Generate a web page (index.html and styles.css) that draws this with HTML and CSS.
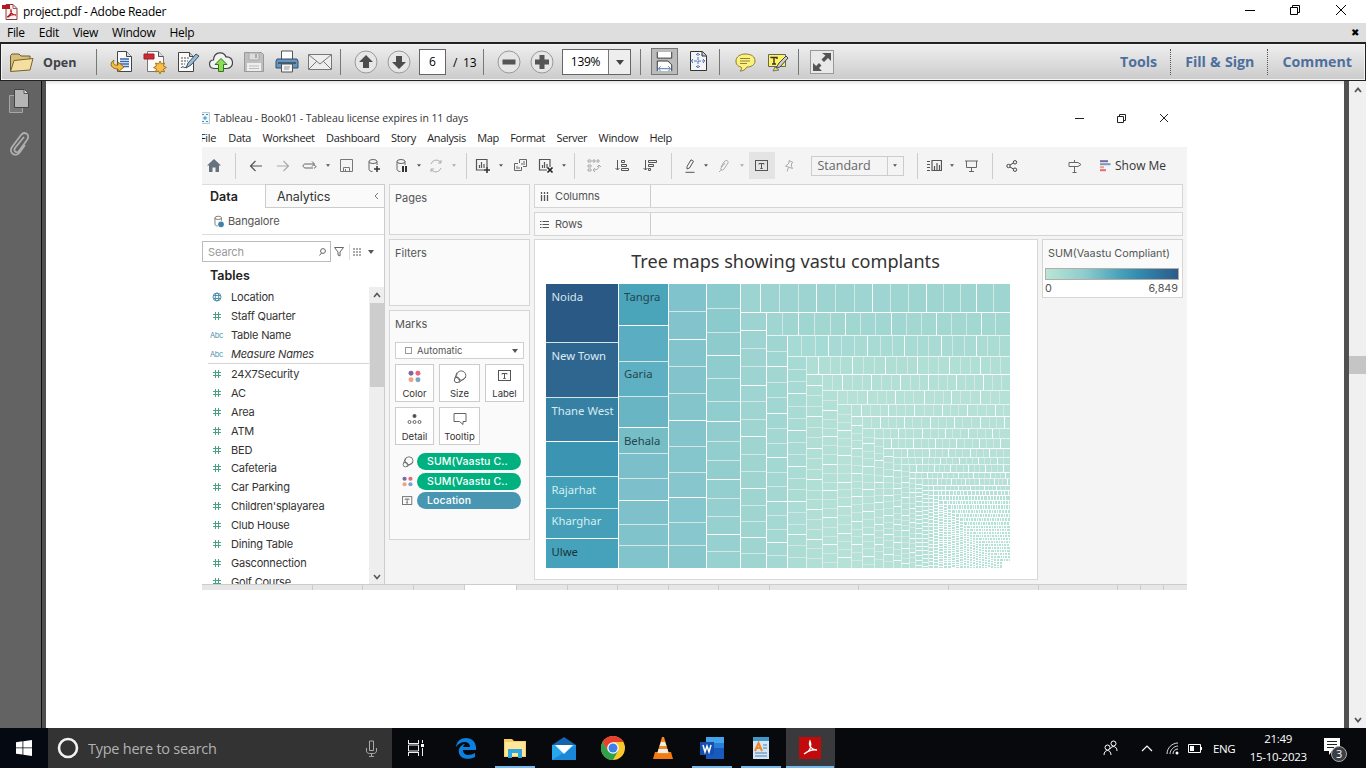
FILE: index.html
```html
<!DOCTYPE html>
<html lang="en">
<head>
<meta charset="utf-8">
<title>project.pdf - Adobe Reader</title>
<link rel="stylesheet" href="styles.css">
</head>
<body>
<svg class="defs" width="0" height="0">
  <symbol id="dots" viewBox="0 0 12 12"><circle cx="2.8" cy="3" r="2.3" fill="#7b6a9c"/><circle cx="9.2" cy="3" r="2.3" fill="#ee6478"/><circle cx="2.8" cy="9" r="2.3" fill="#f0a37c"/><circle cx="9.2" cy="9" r="2.3" fill="#7ba3cc"/></symbol>
  <symbol id="size" viewBox="0 0 14 14"><g fill="none" stroke="#666"><circle cx="8.2" cy="5.5" r="4.6"/><circle cx="4" cy="10" r="2.7"/><path d="M4 2.5L1.8 8.500M13 7L6 12.500"/></g></symbol>
  <symbol id="tbox" viewBox="0 0 14 12"><rect x=".5" y=".5" width="12" height="10" fill="none" stroke="#555"/><path d="M4 4.500V3.500h5v1M6.500 3.500v5M5.300 8.500h2.400" fill="none" stroke="#555"/></symbol>
  <symbol id="caret" viewBox="0 0 6 4"><path d="M0 0h6L3 4z"/></symbol>
  <symbol id="globe" viewBox="0 0 10 10"><g fill="none" stroke="#4b93ad"><circle cx="5" cy="5" r="4"/><ellipse cx="5" cy="5" rx="1.8" ry="4"/><path d="M1 3.500h8M1 6.500h8"/></g></symbol>
  <symbol id="hash" viewBox="0 0 8 8"><path d="M2.500 0v8M5.500 0v8M0 2.500h8M0 5.500h8" stroke="#4aa183" fill="none"/></symbol>
  <symbol id="chart" viewBox="0 0 16 16"><path d="M12 9V1.500H1.500v10.500H9M4.500 10V7M6.500 10V4M9 10V6" fill="none" stroke="#555" stroke-width="1.200"/></symbol>
  <symbol id="cyl" viewBox="0 0 14 16"><g fill="none" stroke="#666"><ellipse cx="6" cy="3.500" rx="4" ry="2"/><path d="M2 3.500v8c0 1 1.500 2 3.500 2M10 3.500V7"/></g></symbol>
</svg>
<header class="titlebar">
  <svg width="16" height="16" viewBox="0 0 16 16"><path d="M4 .5h7l4 4v11H4z" fill="#f8f4f4" stroke="#8a3a3c"/><path d="M11 .5v4h4" fill="none" stroke="#a55"/><path d="M0 1h8v4H0z" fill="#b5191f"/><path d="M5 13c3-1 5-5 4-7-1 3 2 5 5 5-3-1-6 0-8 2" fill="none" stroke="#b5191f" stroke-width="1.300"/></svg>
  <span class="title">project.pdf - Adobe Reader</span>
  <svg class="winctl" width="108" height="14" viewBox="0 0 108 14"><g fill="none" stroke="#000"><path d="M2 7.500h10M47.500 4.500h7v7h-7zM49.500 4V2.500h7v7H55M93 2l10 10M103 2L93 12"/></g></svg>
</header>
<nav class="menubar"><span>File</span><span>Edit</span><span>View</span><span>Window</span><span>Help</span><b>✖</b></nav>
<div class="toolbar">
  <div class="open"><svg width="26" height="21" viewBox="0 0 26 21"><path d="M1.500 19V3.500L3 2h7l2 2h9v4" fill="#d8c07c" stroke="#6d5b2c"/><path d="M1.500 19.500L5 8.500l19-2L21 18z" fill="#f4dfa0" stroke="#75622f"/></svg><b>Open</b></div>
  <i class="sep"></i>
  <div class="slots">
    <svg viewBox="0 0 24 24"><path d="M7.500 1.500h9l5 5v15h-14z" fill="#fafafa" stroke="#444"/><path d="M16.500 1.500v5h5" fill="#ddd" stroke="#444"/><path d="M10 9h9M10 11.500h9M10 14h9M12 16.500h7" stroke="#3567b5" stroke-width="1.300"/><path d="M4 10c-6 4-2 9 4 9v3l6-5-6-5v3c-3 1-6-1-4-5z" fill="#f3bd42" stroke="#946a14"/></svg>
    <svg viewBox="0 0 24 24"><path d="M4.500 1.500h11l5 5v15h-16z" fill="#fafafa" stroke="#777"/><path d="M15.500 1.500v5h5" fill="#ddd" stroke="#555"/><path d="M1 4h10v5H1z" fill="#cf2833" stroke="#9d2028"/><path d="M17 11l1.500 3 3-1-1 3 3 1.500-3 1.500 1 3-3-1-1.500 3-1.500-3-3 1 1-3-3-1.500 3-1.500-1-3 3 1z" fill="#f5bf4e" stroke="#aa7415"/></svg>
    <svg viewBox="0 0 24 24"><path d="M2.500 2.500h11l4 4v15h-15z" fill="#fafafa" stroke="#444"/><path d="M13.500 2.500v4h4" fill="#ccc" stroke="#444"/><path d="M5 8h8M5 11h7M5 14h4" stroke="#555" stroke-dasharray="2 1"/><path d="M10 18l2-5 8-9 3 2-8 9z" fill="#99bcd5" stroke="#3b5166"/><path d="M5 18c2-3 3 1 5-1" stroke="#333" fill="none"/></svg>
    <svg viewBox="0 0 24 24"><path d="M6 18.500c-7 0-7-8-1.500-8.500C5 1 15 1 17 7c8-1 9 11 1 11.500z" fill="#f2f2f2" stroke="#444" stroke-width="1.200"/><path d="M12 8.500l6 6h-3.500v7h-5v-7H6z" fill="#8cdc55" stroke="#35761c"/></svg>
    <svg viewBox="0 0 24 24"><path d="M2.500 2.500h17l2 2v17h-19z" fill="#bfbfbf" stroke="#999"/><path d="M7 3h10v7H7z" fill="#ddd" stroke="#aaa"/><path d="M13 4h2v4h-2z" fill="#aaa"/><path d="M5 13h14v8H5z" fill="#eee"/><path d="M7 16h10M7 18.500h10" stroke="#bbb"/></svg>
    <svg viewBox="0 0 24 24"><path d="M6.500 1h11v9h-11z" fill="#fff" stroke="#555"/><path d="M2 9h20l1 2v7H1v-7z" fill="#6497c2" stroke="#334d68"/><path d="M3 13h18" stroke="#222"/><path d="M6.500 14h11v8h-11z" fill="#f5f5f5" stroke="#555"/><path d="M9 17h6M9 19h5" stroke="#999"/></svg>
    <svg viewBox="0 0 24 24"><path d="M.5 4.500h23v15H.5z" fill="#eee" stroke="#777"/><path d="M1 5l11 9L23 5M1 19l8-8M23 19l-8-8" fill="none" stroke="#777"/></svg>
  </div>
  <i class="sep"></i>
  <div class="slots">
    <svg viewBox="0 0 24 24"><circle cx="12" cy="12" r="11" fill="#e6e6e6" stroke="#999"/><path d="M12 5l7 7h-4v6H9v-6H5z" fill="#4c4c4c"/></svg>
    <svg viewBox="0 0 24 24"><circle cx="12" cy="12" r="11" fill="#e6e6e6" stroke="#999"/><path d="M12 19l7-7h-4V6H9v6H5z" fill="#4c4c4c"/></svg>
  </div>
  <span class="pagebox">6</span><span class="pages">/&nbsp; 13</span>
  <i class="sep"></i>
  <div class="slots">
    <svg viewBox="0 0 24 24"><circle cx="12" cy="12" r="11" fill="#e6e6e6" stroke="#999"/><path d="M5.500 9.500h13v5h-13z" fill="#555"/></svg>
    <svg viewBox="0 0 24 24"><circle cx="12" cy="12" r="11" fill="#e6e6e6" stroke="#999"/><path d="M5 9.500h4.500V5h5v4.500H19v5h-4.500V19h-5v-4.500H5z" fill="#555"/></svg>
  </div>
  <div class="zoom"><span>139%</span><i><svg width="8" height="5"><path d="M0 0h8L4 5z" fill="#444"/></svg></i></div>
  <i class="sep"></i>
  <div class="slots fit">
    <svg class="on" viewBox="0 0 26 26"><path d="M5.500 3v6.500h15V3M5.500 23V12.500h11l4 4V23" fill="#fff" stroke="#333"/><path d="M7 20.500h12M9 18l-2.500 2.500L9 23M17 18l2.500 2.500L17 23" fill="none" stroke="#4a6fb5"/></svg>
    <svg viewBox="0 0 24 24"><path d="M4.500 2.500h12l4 4v15h-16z" fill="#f4f4f4" stroke="#333"/><path d="M16 2.500V7h4" fill="#ccc" stroke="#333"/><path d="M12 4v15M4 12h16M10 6l2-2 2 2M10 17l2 2 2-2M7 10l-2 2 2 2M17 10l2 2-2 2" fill="none" stroke="#4a70c0" stroke-dasharray="3 1"/></svg>
  </div>
  <i class="sep"></i>
  <div class="slots">
    <svg viewBox="0 0 24 24"><path d="M12 4c7 0 10 3 10 7s-4 6-8 6c-2 3-4 4-7 4 2-2 2-3 1-4-4-1-5-3-5-6 0-4 4-7 9-7z" fill="#fcf17c" stroke="#8a7d32"/><path d="M7 8.500h10M7 11h10M7 13.500h7" stroke="#8d8340"/></svg>
    <svg viewBox="0 0 24 24"><path d="M2.500 4.500h17v12h-17z" fill="#fff25c" stroke="#666"/><path d="M5 8V7.500h6V9M8 8v6M6 14h4" stroke="#333" fill="none" stroke-width="1.400"/><path d="M10 18l3-5 7-7 2 2-8 9z" fill="#ccc" stroke="#444"/><path d="M7 21l2-4 4 3z" fill="#e6e047" stroke="#777"/></svg>
  </div>
  <i class="sep"></i>
  <svg class="expand" width="24" height="24" viewBox="0 0 24 24"><rect x=".5" y=".5" width="23" height="23" fill="#e9e9e9" stroke="#999"/><path d="M12 3h9v8l-3-3-4 4-2.500-2.500 4-4zM3 13v8h9l-3-3 2.500-2.500L9 13l-2.800 3z" fill="#555"/></svg>
  <div class="links"><b>Tools</b><b>Fill &amp; Sign</b><b>Comment</b></div>
</div>
<div class="reader">
  <aside class="rail">
    <svg width="24" height="26" viewBox="0 0 24 26"><path d="M2.500 7.500h13v17h-13z" fill="#777" stroke="#a6a6a6"/><path d="M7.500 1.500h10l4 4v14h-14z" fill="#b5b5b5" stroke="#444"/><path d="M17 1.500v4h4" fill="#ddd" stroke="#555"/></svg>
    <svg width="24" height="26" viewBox="0 0 24 26"><path d="M17 6l-9 11c-2 3 2 6 4 3l8-11c4-6-3-9-6-5L5 16c-4 6 4 11 8 5l5-7" fill="none" stroke="#b0b0b0" stroke-width="1.700"/></svg>
  </aside>
  <main class="page">
    <section class="tableau">
      <div class="t-title"><svg width="8" height="12" viewBox="0 0 8 12"><path d="M0 .5h7.500v11H0" fill="#eef6fb" stroke="#b8cad6"/><path d="M3 4v4M1 6h4M0 2.500h2M4 2.500h2M0 9.500h2M4 9.500h2" stroke="#3f8fc0"/></svg><span>Tableau - Book01 - Tableau license expires in 11 days</span>
        <svg class="t-win" width="96" height="12" viewBox="0 0 96 12"><path d="M2 6.500h9M44.500 4.500h6v6h-6zM46.500 4V2.500h6v6H51M87 2l8 8M95 2l-8 8" fill="none" stroke="#222"/></svg></div>
      <div class="t-menu"><span class="cut">File</span><span>Data</span><span>Worksheet</span><span>Dashboard</span><span>Story</span><span>Analysis</span><span>Map</span><span>Format</span><span>Server</span><span>Window</span><span>Help</span></div>
      <div class="t-tools">
        <svg width="14" height="13" viewBox="0 0 14 13"><path d="M7 0l7 6.500h-2V13H8.500V8.500h-3V13H2V6.500H0z" fill="#66727f"/></svg>
        <i class="bar"></i>
        <svg width="14" height="12" viewBox="0 0 14 12"><path d="M13 6H1.500M6.500 1l-5 5 5 5" fill="none" stroke="#555" stroke-width="1.200"/></svg>
        <svg width="14" height="12" viewBox="0 0 14 12"><path d="M1 6h11.500M7.500 1l5 5-5 5" fill="none" stroke="#aaa" stroke-width="1.200"/></svg>
        <svg width="16" height="12" viewBox="0 0 16 12"><path d="M11 8H3C0 7 1 4 3 4h9M10 1.500L12.500 4 10 6.500M12 5c3 1 2 3 0 3" fill="none" stroke="#666"/></svg>
        <svg class="c"><use href="#caret"/></svg>
        <svg width="13" height="13" viewBox="0 0 13 13"><path d="M.5.5h12v12H.5zM3.500 12V8.500h6V12M5.500 10v2" fill="none" stroke="#777"/></svg>
        <svg width="14" height="16" viewBox="0 0 14 16"><use href="#cyl"/><path d="M10 8v6M7 11h6" stroke="#333" stroke-width="1.500"/></svg>
        <svg width="14" height="16" viewBox="0 0 14 16"><use href="#cyl"/><path d="M8 8v6M11 8v6" stroke="#333" stroke-width="2"/></svg>
        <svg class="c"><use href="#caret"/></svg>
        <svg width="14" height="14" viewBox="0 0 14 14"><path d="M2 5c2-5 8-5 10-1M12 9c-2 5-8 5-10 1M12 1v3H9M2 13v-3h3" fill="none" stroke="#aaa"/></svg>
        <svg class="c dim"><use href="#caret"/></svg>
        <i class="bar"></i>
        <svg width="16" height="16" viewBox="0 0 16 16"><use href="#chart"/><path d="M12 9v6M9 12h6" stroke="#333" stroke-width="1.600"/></svg>
        <svg class="c"><use href="#caret"/></svg>
        <svg width="13" height="13" viewBox="0 0 13 13"><path d="M5.500 4V.5h7v7H9M4 4.500H.5v7h7V8M3 10V7M5 10V8M8 6V4M10 6V2" fill="none" stroke="#666"/></svg>
        <svg width="16" height="16" viewBox="0 0 16 16"><use href="#chart"/><path d="M9.500 9.500l5 5M14.500 9.500l-5 5" stroke="#222" stroke-width="1.700"/></svg>
        <svg class="c"><use href="#caret"/></svg>
        <i class="bar"></i>
        <svg width="14" height="13" viewBox="0 0 14 13"><path d="M1 1h3v2H1zM6 1h2v2H6zM10 1h2v2h-2zM1 6h3v2H1zM1 10h3v2H1zM6 11c5 0 6-2 6-5M8 9l-2 2 2 2M10 8l2-2 2 2" fill="none" stroke="#aaa"/></svg>
        <svg width="14" height="13" viewBox="0 0 14 13"><path d="M2.500 1v10M.5 9l2 2 2-2M6.500 1.500h3v2h-3zM6.500 5.500h5v2h-5zM6.500 9.500h7v2h-7z" fill="none" stroke="#555"/></svg>
        <svg width="14" height="13" viewBox="0 0 14 13"><path d="M2.500 1v10M.5 9l2 2 2-2M5.500 1.500h8v2h-8zM5.500 5.500h5v2h-5zM5.500 9.500h2v2h-2z" fill="none" stroke="#555"/></svg>
        <i class="bar"></i>
        <svg width="12" height="14" viewBox="0 0 12 14"><path d="M3 10V7.500L7 .8l2.500 1.500-4 6.700zM1.500 13.300h9" fill="none" stroke="#555"/></svg>
        <svg class="c"><use href="#caret"/></svg>
        <svg width="12" height="14" viewBox="0 0 12 14"><path d="M3 8l3-5c2-3 5-1 4 1L6 10c-1 2-4 1-3-1l4-5M1 13l3-3" fill="none" stroke="#aaa"/></svg>
        <svg class="c dim"><use href="#caret"/></svg>
        <span class="tbtn"><svg width="14" height="12"><use href="#tbox"/></svg></span>
        <svg width="10" height="12" viewBox="0 0 10 12"><path d="M5 .5l4 2-1.500 1v3l1 2-7-2.500L3 5l2-2zM4.500 7.500L3 11.500" fill="none" stroke="#aaa"/></svg>
        <span class="std"><em>Standard</em><i><svg class="c"><use href="#caret"/></svg></i></span>
        <i class="bar"></i>
        <svg width="15" height="12" viewBox="0 0 15 12"><path d="M0 1.500h3M0 4.500h3M0 7.500h3M0 10.500h3M5 .5h9.500v10H5zM7.500 10V6M10 10V3M12.500 10V5" fill="none" stroke="#555" stroke-width="1.200"/></svg>
        <svg class="c"><use href="#caret"/></svg>
        <svg width="13" height="12" viewBox="0 0 13 12"><path d="M0 1h13M1.500 1v6.500h10V1M6.500 7.500v4M4 11.500h5" fill="none" stroke="#666"/></svg>
        <i class="bar"></i>
        <svg width="12" height="12" viewBox="0 0 12 12"><g fill="none" stroke="#444"><circle cx="2.500" cy="6" r="1.700"/><circle cx="9" cy="2.300" r="1.700"/><circle cx="9" cy="9.700" r="1.700"/><path d="M4 5l3.500-2M4 7l3.500 2"/></g></svg>
        <span></span>
        <svg width="14" height="14" viewBox="0 0 14 14"><path d="M1 3.500v4h9l3-2-3-2zM6.500 1v2M6.500 8v5.500M4.500 13.500h4" fill="none" stroke="#666"/></svg>
        <span class="show"><svg width="11" height="12" viewBox="0 0 11 12"><path d="M0 1.200h8" stroke="#776998" stroke-width="2"/><path d="M0 4.200h10.500" stroke="#6d9cc8" stroke-width="2"/><path d="M0 7.200h4" stroke="#f0a37c" stroke-width="2"/><path d="M0 10.200h6" stroke="#ee6478" stroke-width="2"/></svg>Show Me</span>
      </div>
      <div class="t-body">
        <div class="data">
          <div class="tabs"><b>Data</b><span>Analytics<svg width="5" height="8" viewBox="0 0 5 8"><path d="M4 1L1 4l3 3" fill="none" stroke="#777"/></svg></span></div>
          <div class="source"><svg width="12" height="13" viewBox="0 0 14 16"><use href="#cyl"/><circle cx="9.500" cy="11.500" r="3.500" fill="#3d84a8"/></svg>Bangalore</div>
          <div class="search"><span>Search<svg width="7" height="8" viewBox="0 0 7 8"><circle cx="4" cy="3" r="2.400" fill="none" stroke="#666"/><path d="M2.500 5L.5 7.500" stroke="#666"/></svg></span><svg width="10" height="10" viewBox="0 0 10 10"><path d="M.5.500h9L6 5v4L4 8V5z" fill="none" stroke="#666"/></svg><i></i><svg width="9" height="8" viewBox="0 0 9 8"><path d="M0 1h9M0 4h9M0 7h9" stroke="#555" stroke-dasharray="2 1"/></svg><svg class="c big"><use href="#caret"/></svg></div>
          <h3>Tables</h3>
          <div class="fields">
            <ul><li><svg width="10" height="10"><use href="#globe"/></svg>Location</li><li><svg width="8" height="8"><use href="#hash"/></svg>Staff Quarter</li><li><small>Abc</small>Table Name</li><li><small>Abc</small><em>Measure Names</em></li>
            <li class="rule"></li><li><svg width="8" height="8"><use href="#hash"/></svg>24X7Security</li><li><svg width="8" height="8"><use href="#hash"/></svg>AC</li><li><svg width="8" height="8"><use href="#hash"/></svg>Area</li><li><svg width="8" height="8"><use href="#hash"/></svg>ATM</li><li><svg width="8" height="8"><use href="#hash"/></svg>BED</li><li><svg width="8" height="8"><use href="#hash"/></svg>Cafeteria</li><li><svg width="8" height="8"><use href="#hash"/></svg>Car Parking</li><li><svg width="8" height="8"><use href="#hash"/></svg>Children'splayarea</li><li><svg width="8" height="8"><use href="#hash"/></svg>Club House</li><li><svg width="8" height="8"><use href="#hash"/></svg>Dining Table</li><li><svg width="8" height="8"><use href="#hash"/></svg>Gasconnection</li><li><svg width="8" height="8"><use href="#hash"/></svg>Golf Course</li></ul>
            <div class="vscroll"><svg width="8" height="6" viewBox="0 0 8 6"><path d="M1 5l3-3.500L7 5" fill="none" stroke="#555" stroke-width="1.500"/></svg><i></i><svg width="8" height="6" viewBox="0 0 8 6"><path d="M1 1l3 3.500L7 1" fill="none" stroke="#555" stroke-width="1.500"/></svg></div>
          </div>
        </div>
        <div class="cards">
          <div class="card pg">Pages</div>
          <div class="card fl">Filters</div>
          <div class="card mk">Marks
            <div class="auto"><svg width="8" height="8"><rect x=".5" y=".5" width="6" height="6" fill="none" stroke="#999"/></svg><span>Automatic</span><i><svg class="c big"><use href="#caret"/></svg></i></div>
            <div class="btns">
              <span><svg width="13" height="13"><use href="#dots"/></svg>Color</span>
              <span><svg width="14" height="14"><use href="#size"/></svg>Size</span>
              <span><svg width="14" height="12"><use href="#tbox"/></svg>Label</span>
              <span><svg width="15" height="12" viewBox="0 0 15 12"><circle cx="7.500" cy="3" r="2" fill="#555"/><g fill="none" stroke="#666"><circle cx="2.500" cy="9" r="1.500"/><circle cx="7.500" cy="9" r="1.500"/><circle cx="12.500" cy="9" r="1.500"/></g></svg>Detail</span>
              <span><svg width="14" height="12" viewBox="0 0 14 12"><path d="M1 .5h12v8h-3v3L6.500 8.500H1z" fill="none" stroke="#666"/></svg>Tooltip</span>
            </div>
            <div class="pill"><svg width="12" height="12"><use href="#size"/></svg><b>SUM(Vaastu C..</b></div>
            <div class="pill"><svg width="11" height="11"><use href="#dots"/></svg><b>SUM(Vaastu C..</b></div>
            <div class="pill blue"><svg width="11" height="10"><use href="#tbox"/></svg><b>Location</b></div>
          </div>
        </div>
        <div class="work">
          <div class="shelf"><span><svg width="9" height="9" viewBox="0 0 9 9"><path d="M1.500 3v6M4.500 3v6M7.500 3v6M1.500 0v2M4.500 0v2M7.500 0v2" stroke="#555" stroke-width="1.300"/></svg>Columns</span></div>
          <div class="shelf"><span><svg width="9" height="9" viewBox="0 0 9 9"><path d="M2.500 1.500H9M2.500 4.500H9M2.500 7.500H9M0 1.500h1.500M0 4.500h1.500M0 7.500h1.500" stroke="#555"/></svg>Rows</span></div>
          <div class="lower">
            <div class="view"><h2>Tree maps showing vastu complants</h2><svg id="treemap" width="465" height="285" viewBox="546 284 465 285" shape-rendering="crispEdges"></svg></div>
            <div class="legend"><p>SUM(Vaastu Compliant)</p><div class="ramp"></div><div class="range"><span>0</span><span>6,849</span></div></div>
          </div>
        </div>
      </div>
      <div class="sheets"><i class="w110"></i><i class="w50"></i><i class="w51"></i><i class="w51"></i><i class="w52 active"></i><i class="w51"></i><i class="w50"></i><i class="w51"></i><i class="w50"></i><i class="w51"></i><i class="w89"></i><i class="w90"></i><i class="w90"></i><i class="w79"></i><i class="w23"></i><i class="w23"></i></div>
    </section>
  </main>
  <aside class="scroll"><svg width="8" height="6" viewBox="0 0 8 6"><path d="M1 5l3-3.500L7 5" fill="none" stroke="#555" stroke-width="1.800"/></svg><i></i><svg width="8" height="6" viewBox="0 0 8 6"><path d="M1 1l3 3.500L7 1" fill="none" stroke="#555" stroke-width="1.800"/></svg></aside>
</div>
<footer class="taskbar">
  <div class="start"><svg width="16" height="16" viewBox="0 0 16 16"><path d="M0 2.200L6.500 1.300V7.500H0zM7.300 1.200L16 0v7.500H7.300zM0 8.300h6.500v6.300L0 13.700zM7.300 8.300H16V16l-8.700-1.200z" fill="#fff"/></svg></div>
  <div class="find"><svg width="22" height="22" viewBox="0 0 22 22"><circle cx="11" cy="11" r="9" fill="none" stroke="#f2f2f2" stroke-width="2.600"/></svg><span>Type here to search</span><svg width="11" height="17" viewBox="0 0 11 17"><path d="M3.500 1h4v9.500h-4zM.5 8v3c0 1 1 2.500 3 2.500h4c2 0 3-1.500 3-2.500V8M5.500 13.500V16M3 16.400h5" fill="none" stroke="#aaa"/></svg></div>
  <div class="apps">
    <span><svg width="17" height="16" viewBox="0 0 17 16"><path d="M0 3.500h11M0 12.500h11M.5 0v3.500M10.500 0v3.500M.5 12.500V16M10.500 12.500V16M.5 5h10v6H.5zM14.500 0v3M14.500 8v8" fill="none" stroke="#eee"/><path d="M13 4h3v3h-3z" fill="#fff"/></svg></span>
    <span><svg width="22" height="22" viewBox="0 0 22 22"><path d="M1 10C2-2 20-2 21 10v3H8c0 6 7 6 12 3v4C10 25 2 19 4 12c1-3 4-5 6-5-1 1-2 2-2 3h7C15 4 6 3 1 10z" fill="#0c80e0"/></svg></span>
    <span class="run"><svg width="22" height="20" viewBox="0 0 22 20"><path d="M0 1h8l2 2h12v16H0z" fill="#f3ce62"/><path d="M1 4h20v14H1z" fill="#ffe79a"/><path d="M4 11h14v9h-4v-5H8v5H4z" fill="#32a6de"/></svg></span>
    <span><svg width="24" height="23" viewBox="0 0 24 23"><path d="M0 8L12 0l12 8z" fill="#1265ae"/><path d="M0 8h24v15H0z" fill="#28a8ea"/><path d="M0 23L24 8v15z" fill="#1a88d8"/><path d="M3 8h18l-9 9z" fill="#fff"/></svg></span>
    <span><svg width="24" height="24" viewBox="0 0 24 24"><circle cx="12" cy="12" r="12" fill="#fbc82c"/><path d="M1.600 6A12 12 0 0 1 22.400 6H12L6.800 15z" fill="#e8402f"/><path d="M1.600 6A12 12 0 0 0 12 24l5-9H7z" fill="#2ca24c"/><circle cx="12" cy="12" r="5.800" fill="#fff"/><circle cx="12" cy="12" r="4.500" fill="#3f7fe8"/></svg></span>
    <span><svg width="22" height="24" viewBox="0 0 22 24"><path d="M3 16h16l2 7H1z" fill="#f17b10"/><path d="M10 1h2l5 17H5z" fill="#f58a19"/><path d="M9 6h4l1.500 4h-7zM6.500 13h9l1 4h-11z" fill="#eee"/></svg></span>
    <span class="run"><svg width="24" height="22" viewBox="0 0 24 22"><path d="M6 0h18v22H6z" fill="#2b7cd3"/><path d="M6 0h18v6H6z" fill="#41a5ee"/><path d="M6 11h18v11H6z" fill="#185abd"/><path d="M0 5h14v13H0z" fill="#1650ae"/><path d="M3 8l2 7 2-6 2 6 2-7" fill="none" stroke="#fff" stroke-width="1.500"/></svg></span>
    <span class="run"><svg width="18" height="22" viewBox="0 0 18 22"><path d="M1 0h16v22H1z" fill="#d3e6f6"/><path d="M1 0h16v4H1z" fill="#4197cb"/><path d="M3 14l3.500-8L10 14M4 11h5" fill="none" stroke="#ed8625" stroke-width="2"/><path d="M11 8h4M11 11h4M3 16h12M3 19h12" stroke="#517caf"/></svg></span>
    <span class="run on"><svg width="22" height="22" viewBox="0 0 22 22"><path d="M0 0h22v22H0z" fill="#c2090c"/><path d="M5 17c7-3 8-9 6-13-2 5 2 9 7 9-5-1-9 1-13 4z" fill="none" stroke="#fff" stroke-width="1.300"/></svg></span>
  </div>
  <div class="tray">
    <svg width="15" height="16" viewBox="0 0 15 16"><g fill="none" stroke="#fff"><circle cx="10.500" cy="3.500" r="2.500"/><circle cx="4.500" cy="7.500" r="2.500"/><path d="M1 15c0-6 7-6 7 0M7 9c2-4 7-3 7 2"/></g></svg>
    <svg width="12" height="7" viewBox="0 0 12 7"><path d="M1 6l5-5 5 5" fill="none" stroke="#fff" stroke-width="1.200"/></svg>
    <svg width="13" height="13" viewBox="0 0 13 13"><path d="M1 12C1 6 6 1 12 1M4 12c0-4 4-8 8-8M7 12c0-3 2-5 5-5" fill="none" stroke="#ddd"/><circle cx="11" cy="11" r="1.500" fill="#fff"/></svg>
    <svg width="15" height="9" viewBox="0 0 15 9"><path d="M.5.5h12v8H.5zM13.500 3v3" fill="none" stroke="#fff"/><path d="M2 2h4v5H2z" fill="#fff"/></svg>
    <span>ENG</span><div class="clock"><span>21:49</span><span>15-10-2023</span></div>
    <div class="note"><svg width="28" height="26" viewBox="0 0 28 26"><path d="M1 1h16v13H9l-3 4v-4H1z" fill="#fff"/><path d="M4 4.500h10M4 7.500h10M4 10.500h7" stroke="#222"/><circle cx="16" cy="17" r="7.500" fill="#3b3e42" stroke="#aaa"/><text x="13" y="21">3</text></svg></div>
  </div>
</footer>
<script src="treemap.js"></script>
</body>
</html>
```
FILE: styles.css
```css
*{box-sizing:border-box}
body{margin:0;width:1366px;height:768px;overflow:hidden;display:flex;flex-direction:column;background:#fff;color:#000;font:12px "Open Sans","Noto Sans",sans-serif}
.defs{position:absolute}
svg{flex:none}
i,em{font-style:normal}
ul,h2,h3,p{margin:0;padding:0}
.titlebar{height:23px;flex:none;display:flex;align-items:center;padding-left:2px}
.title{margin-left:5px;letter-spacing:-.28px}
.winctl{margin-left:auto;margin-right:15px;margin-top:-3px}
.menubar{height:19px;flex:none;display:flex;align-items:center;gap:14px;padding:0 7px 0 7px;background:#dedede;letter-spacing:-.3px}
.menubar b{margin-left:auto;font:10px "DejaVu Sans",sans-serif;font-weight:700}
.toolbar{height:39px;flex:none;display:flex;align-items:center;border:1px solid #222;border-top-width:2px;background:linear-gradient(#efefef,#cbcbcb);box-shadow:inset 0 0 0 1px #f4f4f4}
.open{width:95px;display:flex;align-items:center;gap:8px;padding-left:8px;color:#3d4247;font-size:12.5px}
.sep{width:1px;height:26px;background:#777;flex:none}
.slots{display:flex;margin:0 4px 0 8px}
.slots svg{width:24px;height:24px;margin:0 4.500px}
.slots.fit{margin:0 5px 0 9px}
.slots.fit svg{margin:0 4px 0 0}
.slots.fit svg.on{width:27px;height:27px;margin:-1px 8px 0 1px;background:#bbb;border:1px solid #777}
.pagebox{width:27px;height:26px;border:1px solid #666;background:#fff;text-align:center;line-height:24px}
.pages{width:37px;padding-left:7px;white-space:nowrap;letter-spacing:-.2px}
.zoom{width:69px;height:26px;display:flex;border:1px solid #666;background:#fff;line-height:24px;margin-right:9px}
.zoom span{flex:1;text-align:center;letter-spacing:-.3px}
.zoom i{width:22px;border-left:1px solid #777;background:#eee;display:flex;align-items:center;justify-content:center}
.expand{margin-left:11px}
.links{margin-left:auto;display:flex;align-items:center;color:#4d6f9d;font-size:14.200px}
.links b{padding:0 13px 0 14px;height:26px;line-height:25px;word-spacing:.5px}
.links b+b{border-left:1px dotted #555}
.reader{height:647px;flex:none;display:flex;background:#505050}
.rail{width:42px;background:#636363;border-right:1px solid #111;display:flex;flex-direction:column;align-items:center;gap:17px;padding:7px 4px 0 0;margin-right:4px}
.page{width:1298px;background:linear-gradient(#e4e4e4,#fff 4px);padding:28px 0 0 156px}
.scroll{margin-left:5px;width:17px;background:#f0f0f0;display:flex;flex-direction:column;align-items:center;padding:6px 0 5px}
.scroll i{width:17px;height:18px;background:#c5c5c5;margin:263px 0 auto}
.tableau{width:985px;height:481px;background:#fff;color:#333;display:flex;flex-direction:column;overflow:hidden}
.t-title{height:18px;flex:none;display:flex;align-items:center;gap:4px;font-size:10.500px;letter-spacing:-.09px;color:#333}
.t-win{margin-left:auto;margin-right:18px}
.t-menu{height:20px;flex:none;display:flex;align-items:center;gap:11.300px;font-size:11px;letter-spacing:-.34px;color:#222}
.cut{margin-left:-2px;padding-right:1px}
.t-tools{height:37px;flex:none;background:#f4f4f4;display:grid;align-items:center;justify-items:center;grid-template-columns:24px 18px 24px 30px 24px 12px 24px 32px 24px 10px 24px 12px 12px 22px 14px 24px 28px 8px 12px 28px 28px 28px 14px 24px 8px 28px 8px 32px 22px 114px 6px 28px 8px 30px 12px 28px 35px 28px 1fr}
.bar{width:1px;height:26px;background:#ccc}
.c{width:4px;height:3px;fill:#555}
.c.dim{fill:#aaa}
.c.big{width:6px;height:4px}
.tbtn{width:26px;height:27px;background:#e4e4e4;display:flex;align-items:center;justify-content:center}
.std{width:93px;height:20px;border:1px solid #ccc;display:flex;align-items:center;font-size:12.500px;color:#666}
.std em{flex:1;padding-left:6px}
.std i{width:16px;height:18px;border-left:1px solid #ccc;display:flex;align-items:center;justify-content:center}
.show{display:flex;align-items:center;gap:4px;justify-self:start;padding-left:11px;font-size:12px;white-space:nowrap}
.t-body{height:400px;flex:none;display:flex;background:#f4f4f4;font-family:Inter,"Open Sans",sans-serif}
.data{width:183px;background:#fff;border-right:1px solid #ccc;overflow:hidden}
.tabs{height:24px;display:flex;font-size:12.500px}
.tabs b{width:63px;padding-left:8px;line-height:23px;border-top:1px solid #ddd;color:#222;font-weight:600}
.tabs span{flex:1;display:flex;align-items:center;justify-content:space-between;padding:0 5px 0 11px;border:1px solid #ccc;border-right:0;background:#fafafa;letter-spacing:-.1px}
.source{height:27px;display:flex;align-items:center;gap:3px;padding-left:11px;border-bottom:1px solid #ddd;font-size:11px;letter-spacing:-.1px;color:#555}
.search{margin-top:6px;height:21px;display:flex;align-items:center}
.search span{width:129px;height:21px;border:1px solid #bbb;color:#999;display:flex;justify-content:space-between;align-items:center;padding:0 4px 0 5px;margin-right:3px;font-size:11px;letter-spacing:-.1px}
.search i{width:1px;height:16px;background:#ddd;margin:0 3px 0 5px}
.search .big{margin-left:6px}
.data h3{font-size:12.500px;line-height:27px;height:25px;padding-left:8px;color:#222;font-weight:600}
.fields{display:flex;height:297px}
.fields ul{width:167px;list-style:none;padding-left:8px;margin-top:1px}
.fields li{height:18.900px;display:flex;align-items:center;font-size:11px;letter-spacing:-.2px;white-space:nowrap;color:#333}
.fields li>svg,.fields small{width:14px;margin-right:7px;flex:none}
.fields small{font-size:7.500px;color:#4b93ad;letter-spacing:-.4px}
.fields em{font-style:italic}
.fields li.rule{height:1px;background:#d5d5d5;margin:-1px 0 1px -2px}
.vscroll{width:15px;margin-left:auto;background:#eee;display:flex;flex-direction:column;align-items:center;padding:5px 0 4px}
.vscroll i{width:14px;height:84px;background:#cdcdcd;margin:5px 0 auto}
.cards{width:141px;margin-left:4px;display:flex;flex-direction:column;gap:4px}
.card{border:1px solid #d5d5d5;background:#fafafa;padding:6px 5px 0;font-size:11px;color:#555}
.pg{height:51px}.fl{height:67px}.mk{height:230px}
.auto{height:17px;margin-top:11px;border:1px solid #d0d0d0;background:#fff;display:flex;align-items:center;padding-left:9px;font-size:9.500px}
.auto span{flex:1;padding-left:4px}
.auto i{width:16px;display:flex;align-items:center;justify-content:center}
.btns{display:grid;grid-template-columns:39px 41px 39px;gap:5px;margin-top:5px;font-size:9.500px;color:#333}
.btns span{height:38px;border:1px solid #ccc;background:#fff;display:flex;flex-direction:column;align-items:center;justify-content:space-between;padding:5px 0 2px}
.pill{height:19.600px;display:flex;align-items:center}
.btns+.pill{margin-top:7px}
.pill svg{margin-left:7px}
.pill b{margin-left:auto;width:104px;margin-right:3px;height:17px;border-radius:9px;background:#00b180;color:#fff;padding-left:10px;line-height:17px;font-size:10.500px;letter-spacing:.12px;font-weight:500}
.pill.blue b{background:#4996b2}
.work{width:649px;margin-left:4px}
.shelf{height:24px;border:1px solid #d5d5d5;background:#fafafa;margin-bottom:4px}
.shelf span{width:116px;height:22px;border-right:1px solid #ccc;display:flex;align-items:center;gap:6px;padding-left:5px;font-size:11px;letter-spacing:-.15px;color:#555}
.lower{display:flex;gap:4px;align-items:flex-start;margin-top:-1px}
.view{width:504px;height:341px;background:#fff;border:1px solid #d8d8d8;padding-left:11px}
.view h2{font:400 18.100px "Noto Sans","Open Sans",sans-serif;color:#333;height:44px;line-height:42px;padding-right:12px;text-align:center;white-space:nowrap}
#treemap{display:block}
#treemap text{font:11.300px "Noto Sans",sans-serif}
.legend{width:141px;height:59px;background:#fff;border:1px solid #d5d5d5;font-size:10.800px;color:#555}
.legend p{height:28px;line-height:28px;background:#fafafa;padding-left:5px;white-space:nowrap}
.ramp{height:12px;margin:0 3px 0 2px;border:1px solid #b8aca0;background:linear-gradient(90deg,#b9e6d7,#8ccbcd 30%,#4aa3bc 55%,#348bb0 70%,#2b5b8b)}
.range{display:flex;justify-content:space-between;padding:2px 4px 2px 2px}
.sheets{height:6px;flex:none;display:flex;background:#e6e6e6;border-top:1px solid #ccc}
.sheets i{border-right:1px solid #ccc;flex:none}
.sheets .active{background:#fff}
.w110{width:110.500px}.w50{width:50px}.w51{width:51px}.w52{width:52px}.w89{width:89px}.w90{width:90px}.w79{width:79px}.w23{width:23px}
.taskbar{height:40px;flex:none;display:flex;background:#08090c;color:#fff}
.start{width:48px;display:flex;align-items:center;justify-content:center;background:#050a12}
.find{width:344px;background:#333;display:flex;align-items:center;padding:0 15px 0 9px;color:#b2b2b2;font-size:14.500px}
.find span{flex:1;padding-left:9px;letter-spacing:-.25px}
.apps{display:flex}
.apps span{width:49.200px;padding:0 1px;display:flex;align-items:center;justify-content:center}
.apps .run{background:linear-gradient(#76b9ed,#76b9ed) center bottom/40px 2px no-repeat}
.apps .on{background:linear-gradient(#76b9ed,#76b9ed) center bottom/48px 2px no-repeat,#3a3a3c}
.tray{margin-left:auto;width:263px;display:flex;align-items:center;font-size:11.500px;letter-spacing:-.4px}
.tray>svg:nth-child(2){margin-left:23px}
.tray>svg:nth-child(3){margin-left:13px}
.tray>svg:nth-child(4){margin-left:9px}
.tray>span{margin-left:10px}
.clock{width:60px;margin-left:13px;display:flex;flex-direction:column;align-items:center;line-height:18px;white-space:nowrap}
.clock span{letter-spacing:-.3px}
.note{margin-left:15px;margin-top:6px}
.note text{fill:#fff;font:11px "Open Sans",sans-serif}
```
FILE: treemap.js
```js
const svg = document.getElementById('treemap');
const NS = 'http://www.w3.org/2000/svg';
const RIGHT = 1010, BOTTOM = 568;

function add(x, y, w, h, fill) {
  const r = document.createElementNS(NS, 'rect');
  r.setAttribute('x', x); r.setAttribute('y', y);
  r.setAttribute('width', w); r.setAttribute('height', h);
  r.setAttribute('fill', fill);
  svg.appendChild(r);
}
function mix(a, b, t) {
  return 'rgb(' + a.map((v, i) => Math.round(v + (b[i] - v) * t)).join() + ')';
}

// Column right edges and row bottom edges, largest block first
const colEnd = [618,668,706,740,766,787,806,822,837,851,862,874,883,893,901,909,915,922,928,933,938,943,947,951];
const rowEnd = [312,335,356,374,390,404,416,428,438,448,457,464,472,478,485,490,495,500,504,509,513];
const cols = [
  [342,397,441,476,508,538],
  [325,361,396,427,453,478,500,524,545],
  [311,339,366,393,420,446,472,497,522,545],
  [308,332,355,378,401,421,441,460,479,498,516,534,551],
  [330,348,366,385,401,419,436,454,471,488,505,521,537,553],
  [351,366,382,397,413,428,443,457,472,486,501,515,529,542,555],
  [369,381,393,406,418,430,442,454,466,478,489,501,512,524,534,545,557],
  [385,395,406,416,427,437,448,458,469,479,490,499,509,519,529,539,548,558]
];
const rows = [
  [760,779,798,816,835,854,872,890,908,926,943,960,976,993],
  [782,798,814,830,845,860,875,891,906,921,936,951,966,981,995],
  [801,815,828,841,854,867,880,892,904,917,928,941,952,964,976,987,999],
  [818,830,840,852,863,874,885,896,907,917,928,938,949,960,970,980,990,1000],
  [832,842,852,862,871,881,891,900,910,919,928,938,947,956,965,974,983,992,1001]
];
const first = [
  ['#2b5985','#2f6690','#3580a3','#3b94b2','#449fb8','#459fb8','#46a2ba'],
  ['#4aa4ba','#5badc1','#60b0c3','#69b5c4','#77bdc6','#7bbfca','#7dc0cb','#7fc1ca','#80c3cb','#81c4cb']
];
const tones = [[129,195,204],[139,202,205],[157,212,209],[160,214,209],[166,218,212],[175,222,213],[178,224,214],[181,225,215]];

function cuts(from, to, step, seed) {
  const out = [];
  let p = from + step;
  for (let k = 0; p < to - step * 0.5; k++) {
    out.push(Math.round(p));
    p += step * (1 + 0.08 * Math.sin(seed + k));
  }
  return out;
}
function tone(i) { return tones[Math.min(i, tones.length - 1)]; }
function line(i, k) {
  if (i > 16) return '#f6fcfa';
  return (i * 7 + k * 5) % 3 ? '#d5e7e4' : '#fbfffe';
}

let x = 546, y = 284;
for (let i = 0; x < 1004 && y < 563; i++) {
  const small = Math.max(2.4, 9 - (i - 8) * 0.5);
  const xe = colEnd[i] || x + (i < 27 ? 3 : 2);
  const a = tone(i - 2 < 0 ? 0 : i - 2), b = tone(Math.max(0, i - 1));
  const cy = cols[i] || cuts(y, BOTTOM, small, i);
  const ys = [y, ...cy, BOTTOM];
  for (let k = 0; k < ys.length - 1; k++) {
    const fill = first[i] ? first[i][k] : mix(a, b, k / ys.length * 0.8);
    add(x, ys[k], xe - x, ys[k + 1] - ys[k], fill);
    if (k) add(x, ys[k], xe - x, 1, line(i, k));
  }
  add(xe, y, 1, BOTTOM - y, i < 6 || i > 18 ? '#fff' : '#e0efec');
  x = xe + 1;
  if (i >= 3) {
    const j = i - 3;
    const ye = rowEnd[j] || y + (j < 24 ? 3 : 2);
    const cx = rows[j] || cuts(x, RIGHT, Math.max(2.6, 9.4 - (j - 5) * 0.52), j + 2);
    const xs = [x, ...cx, RIGHT];
    for (let k = 0; k < xs.length - 1; k++) {
      add(xs[k], y, xs[k + 1] - xs[k], ye - y, mix(tone(i - 1), tone(i), k / xs.length * 0.5));
      if (k) add(xs[k], y, 1, ye - y, line(j + 1, k));
    }
    add(x, ye, RIGHT - x, 1, j % 3 && j < 14 ? '#e6f3f0' : '#fff');
    y = ye + 1;
  }
}
add(1003, 561, 7, 7, '#fff');
[['Noida',551.5,301,'#d5e5ee'],['New Town',551.5,360,'#dceaf1'],['Thane West',551.5,415,'#d5ebf1'],
 ['Rajarhat',551.5,494,'#d5eff2'],['Kharghar',551.5,525,'#d5eff2'],['Ulwe',551.5,556,'#17343d'],
 ['Tangra',624,301,'#234750'],['Garia',624,378,'#234750'],['Behala',624,445,'#234750']
].forEach(([t, tx, ty, c]) => {
  const e = document.createElementNS(NS, 'text');
  e.setAttribute('x', tx); e.setAttribute('y', ty); e.setAttribute('fill', c);
  e.textContent = t;
  svg.appendChild(e);
});
```
